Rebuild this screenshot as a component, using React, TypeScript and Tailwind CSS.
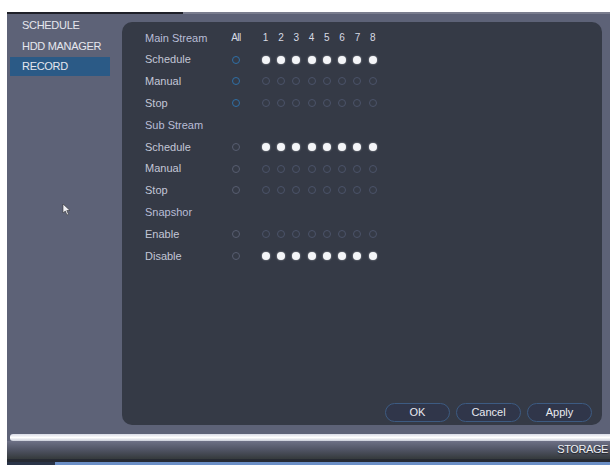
import React from "react";

const rows: { label: string; kind: "head" | "row"; all?: "blue" | "gray"; dots?: "filled" | "empty" }[] = [
  { label: "Main Stream", kind: "head" },
  { label: "Schedule", kind: "row", all: "blue", dots: "filled" },
  { label: "Manual", kind: "row", all: "blue", dots: "empty" },
  { label: "Stop", kind: "row", all: "blue", dots: "empty" },
  { label: "Sub Stream", kind: "head" },
  { label: "Schedule", kind: "row", all: "gray", dots: "filled" },
  { label: "Manual", kind: "row", all: "gray", dots: "empty" },
  { label: "Stop", kind: "row", all: "gray", dots: "empty" },
  { label: "Snapshor", kind: "head" },
  { label: "Enable", kind: "row", all: "gray", dots: "empty" },
  { label: "Disable", kind: "row", all: "gray", dots: "filled" },
];

const nums = [1, 2, 3, 4, 5, 6, 7, 8];

function Dot({ filled }: { filled: boolean }) {
  return filled ? (
    <span className="block w-[8px] h-[8px] rounded-full bg-[#f4f5f8] shadow-[0_0_2px_rgba(255,255,255,0.6)]" />
  ) : (
    <span className="block w-[8px] h-[8px] rounded-full border border-[#4b5369]" />
  );
}

export default function App() {
  return (
    <div
      className="relative w-[612px] h-[470px] bg-white overflow-hidden"
      style={{ fontFamily: '"Liberation Sans", Arial, sans-serif' }}
    >
      <div className="absolute left-[7px] top-[12px] w-[603px] h-[453px] flex flex-col bg-[#5d6277]">
        {/* top edge */}
        <div className="flex h-[2px] shrink-0">
          <div className="w-[176px] bg-[#1e2028]" />
          <div className="flex-1 bg-[#7a7d8e]" />
        </div>
        <div className="flex flex-1 min-h-0">
          {/* sidebar */}
          <div className="w-[115px] shrink-0 pt-[1px] flex flex-col text-[11px] text-[#e6e7ee] tracking-[-0.3px]">
            <div className="h-[21px] flex items-center pl-[15px]">SCHEDULE</div>
            <div className="h-[20px] flex items-center pl-[15px]">HDD MANAGER</div>
            <div className="h-[19px] mt-[1px] ml-[3px] w-[100px] flex items-center pl-[12px] bg-[#2b5a86]">
              RECORD
            </div>
            <div className="relative flex-1">
              <svg
                className="absolute left-[55px] top-[127px]"
                width="9"
                height="13"
                viewBox="0 0 9 13"
              >
                <path d="M1 1 L1 10 L3.3 8 L5 12 L6.5 11.3 L4.8 7.5 L8 7.5 Z" fill="#f0f0f5" stroke="#333" strokeWidth="0.6" />
              </svg>
            </div>
          </div>
          {/* main panel */}
          <div className="flex-1 pt-[8px] pr-[8px] pb-[9px] flex flex-col">
            <div className="flex-1 rounded-[10px] bg-[#353a46] flex flex-col pt-[5px] pl-[23px] pr-[10px] pb-[3px] text-[11px] text-[#c9cbd8]">
              {rows.map((r, i) => (
                <div key={i} className="h-[21.8px] flex items-center">
                  <div className={`w-[83px] shrink-0 ${r.kind === "head" ? "text-[#b9bdd6]" : "text-[#c3c6d6]"}`}>
                    {r.label}
                  </div>
                  <div className="w-[16px] shrink-0 flex justify-center">
                    {i === 0 ? (
                      <span className="text-[#d8dae4] tracking-[-0.5px] text-[10px]">All</span>
                    ) : r.kind === "row" ? (
                      <span
                        className={`block w-[8px] h-[8px] rounded-full ${
                          r.all === "blue" ? "border-[1.5px] border-[#2f6fa6]" : "border border-[#575d70]"
                        }`}
                      />
                    ) : null}
                  </div>
                  <div className="w-[14px] shrink-0" />
                  {i === 0 &&
                    nums.map((n) => (
                      <div key={n} className="w-[15.3px] shrink-0 flex justify-center text-[10px] text-[#d8dae4]">
                        {n}
                      </div>
                    ))}
                  {r.kind === "row" &&
                    nums.map((n) => (
                      <div key={n} className="w-[15.3px] shrink-0 flex justify-center">
                        <Dot filled={r.dots === "filled"} />
                      </div>
                    ))}
                </div>
              ))}
              <div className="flex-1" />
              <div className="flex justify-end gap-[6px]">
                {["OK", "Cancel", "Apply"].map((b) => (
                  <div
                    key={b}
                    className="w-[65px] h-[19px] rounded-full border border-[#3d5b82] bg-[#30364a] flex items-center justify-center text-[11px] text-[#e8e9ef]"
                  >
                    {b}
                  </div>
                ))}
              </div>
            </div>
          </div>
        </div>
        {/* bottom bars */}
        <div className="h-[7px] shrink-0 ml-[3px] bg-gradient-to-b from-[#d9dbe6] via-[#ffffff] to-[#c9ccd8] rounded-l-[3px]" />
        <div className="relative h-[18px] shrink-0 bg-gradient-to-b from-[#6e7186] via-[#4f5363] to-[#353a3c]">
          <span className="absolute right-[2px] top-[0px] text-[11px] text-[#eef0f4] tracking-[-0.4px] [text-shadow:0_1px_1px_rgba(0,0,0,0.6)]">
            STORAGE
          </span>
        </div>
        <div className="h-[3px] shrink-0 bg-[#262a33]" />
        <div className="flex h-[3px] shrink-0">
          <div className="w-[48px] bg-[#2a3448]" />
          <div className="flex-1 bg-[#6b8fc6]" />
        </div>
      </div>
    </div>
  );
}
